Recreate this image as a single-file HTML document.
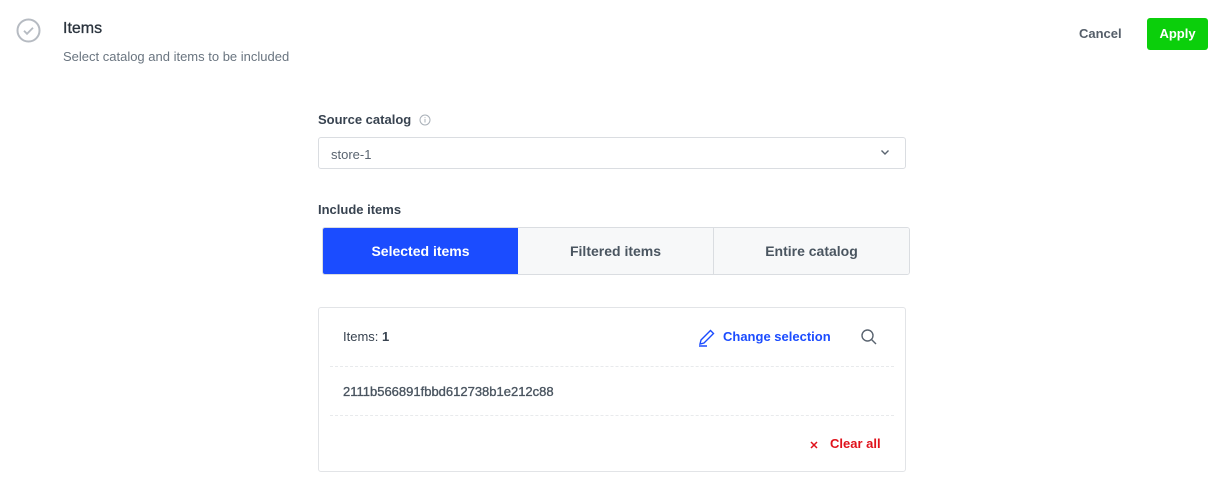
<!DOCTYPE html>
<html><head><style>
*{box-sizing:border-box;margin:0;padding:0}
body{width:1215px;height:488px;background:#fff;font-family:"Liberation Sans",sans-serif;position:relative;overflow:hidden;color:#384350}
.a{position:absolute}
</style></head><body>
<svg class="a" style="left:16px;top:18px" width="25" height="25" viewBox="0 0 25 25"><circle cx="12.5" cy="12.5" r="11" fill="none" stroke="#b6bbc2" stroke-width="2"/><path d="M8 12.8l3 3 6-6" fill="none" stroke="#b6bbc2" stroke-width="1.8"/></svg>
<div class="a" style="left:63px;top:20px;font-size:16px;color:#2a333d;-webkit-text-stroke:0.3px #2a333d">Items</div>
<div class="a" style="left:63px;top:49px;font-size:13px;color:#6a7580">Select catalog and items to be included</div>
<div class="a" style="left:1079px;top:26px;font-size:13px;color:#384350;font-weight:bold;opacity:.85">Cancel</div>
<div class="a" style="left:1147px;top:18px;width:61px;height:32px;background:#0bcf0b;border-radius:3px;color:#fff;font-size:13px;font-weight:bold;text-align:center;line-height:31px">Apply</div>
<div class="a" style="left:318px;top:112px;font-size:13px;font-weight:bold;color:#384350">Source catalog</div>
<svg class="a" style="left:419px;top:114px" width="12" height="12" viewBox="0 0 12 12"><circle cx="6" cy="6" r="5" fill="none" stroke="#a9b0b8"/><path d="M6 5v3.5M6 3.3v.8" stroke="#a9b0b8"/></svg>
<div class="a" style="left:318px;top:137px;width:588px;height:32px;border:1px solid #dadde1;border-radius:3px;font-size:13px;color:#5a6470;padding:9px 12px">store-1</div>
<svg class="a" style="left:880px;top:149px" width="10" height="7" viewBox="0 0 10 7"><path d="M1.5 1.5l3.5 3.5 3.5-3.5" fill="none" stroke="#5a6470" stroke-width="1.4"/></svg>
<div class="a" style="left:318px;top:202px;font-size:13px;font-weight:bold;color:#384350">Include items</div>
<div class="a" style="left:322px;top:227px;width:588px;height:48px;display:flex;border:1px solid #dadde1;border-radius:3px;overflow:hidden;font-size:14px;font-weight:bold">
<div style="flex:0 0 195px;background:#1b4cff;color:#fff;text-align:center;line-height:46px">Selected items</div>
<div style="flex:0 0 196px;background:#f7f8f9;color:#4a5560;text-align:center;line-height:46px;border-right:1px solid #dadde1">Filtered items</div>
<div style="flex:1;background:#f7f8f9;color:#4a5560;text-align:center;line-height:46px">Entire catalog</div>
</div>
<div class="a" style="left:318px;top:307px;width:588px;height:165px;border:1px solid #e2e4e7;border-radius:3px"></div>
<div class="a" style="left:343px;top:329px;font-size:13px;color:#384350">Items: <b>1</b></div>
<svg class="a" style="left:697px;top:328px" width="20" height="20" viewBox="0 0 20 20"><path d="M3 16l1-4L13.5 2.5l3 3L7 15z M2 18h8" fill="none" stroke="#1b4cff" stroke-width="1.4"/></svg>
<div class="a" style="left:723px;top:329px;font-size:13px;font-weight:bold;color:#1b4cff">Change selection</div>
<svg class="a" style="left:860px;top:328px" width="18" height="18" viewBox="0 0 18 18"><circle cx="7.5" cy="7.5" r="5.5" fill="none" stroke="#5a6470" stroke-width="1.4"/><path d="M11.5 11.5l4.5 4.5" stroke="#5a6470" stroke-width="1.4"/></svg>
<div class="a" style="left:330px;top:366px;width:564px;border-top:1px dashed #e8eaec"></div>
<div class="a" style="left:343px;top:384px;font-size:13px;color:#4a5560;-webkit-text-stroke:0.35px #4a5560">2111b566891fbbd612738b1e212c88</div>
<div class="a" style="left:330px;top:415px;width:564px;border-top:1px dashed #e8eaec"></div>
<svg class="a" style="left:809px;top:440px" width="10" height="10" viewBox="0 0 10 10"><path d="M2 2l6 6M8 2l-6 6" stroke="#e0121b" stroke-width="1.5"/></svg>
<div class="a" style="left:830px;top:436px;font-size:13px;font-weight:bold;color:#e0121b">Clear all</div>
</body></html>
